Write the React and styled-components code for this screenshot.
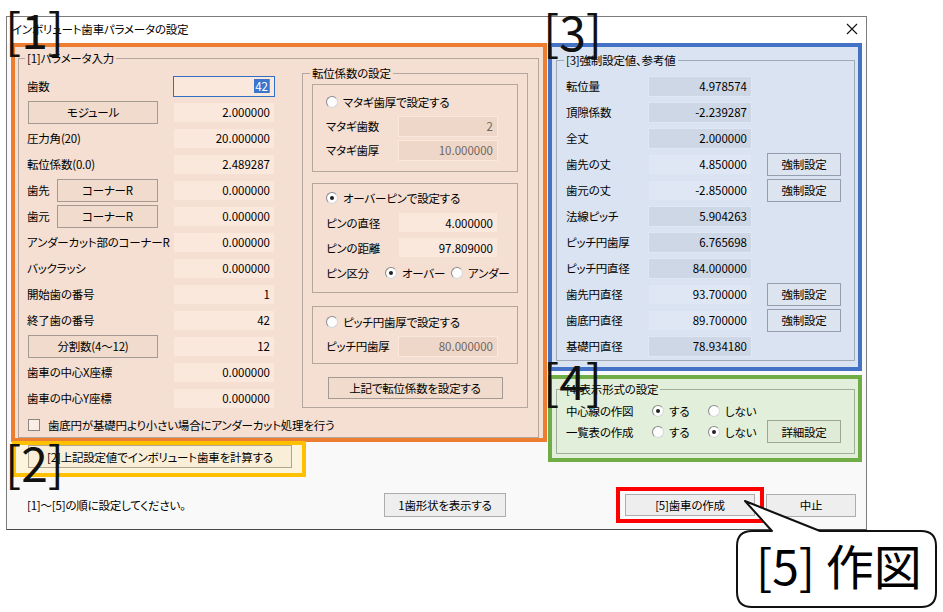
import React from 'react'
import styled, { createGlobalStyle } from 'styled-components'

const tones = {
  plain: { bg: '#f9f9f9', field: '#ffffff', off: '#f0f0f0', line: '#c8c8c8', btn: '#eeeeee', btnLine: '#adadad' },
  orange: { bg: '#f4dfd2', field: '#fbe8dc', off: '#eed7c9', line: '#b4a69c', btn: '#f1dbcd', btnLine: '#a39a94' },
  blue: { bg: '#dae3f1', field: '#e0e7f4', off: '#ced7e6', line: '#a0a9b6', btn: '#dce4f0', btnLine: '#959eae' },
  green: { bg: '#e2efda', field: '#e9f3e3', off: '#d8e5d0', line: '#a3ad9c', btn: '#dfebd7', btnLine: '#9ca697' },
  yellow: { bg: '#fdf4de', field: '#fff8e8', off: '#f3e9d2', line: '#c8bda6', btn: '#f9eed8', btnLine: '#b0a690' },
}

const GlobalStyle = createGlobalStyle`
  body {
    margin: 0;
    background: #ffffff;
    font-family: "Noto Sans CJK JP", "Noto Sans", sans-serif;
    font-size: 11.5px;
    letter-spacing: -0.2px;
    font-feature-settings: "palt";
    color: #000;
  }
`

const Page = styled.div`
  position: relative;
  width: 943px;
  height: 612px;
  overflow: hidden;
`

const Window = styled.div`
  margin: 16px 0 0 6px;
  width: 861px;
  height: 514px;
  box-sizing: border-box;
  border: 1px solid #7c7c7c;
  border-bottom-color: #4a4a4a;
  background: #f9f9f9;
  display: flex;
  flex-direction: column;
`

const TitleBar = styled.div`
  height: 26px;
  background: #ffffff;
  display: flex;
  align-items: center;
  justify-content: space-between;
  padding: 0 8px 2px 5px;
  box-sizing: border-box;
`

const TitleText = styled.span`
  line-height: 14px;
`

const Body = styled.div`
  display: flex;
  gap: 1px;
  padding-left: 4px;
`

const Column = styled.div`
  display: flex;
  flex-direction: column;
`

const Frame = styled.div`
  box-sizing: border-box;
  width: ${p => p.$w}px;
  height: ${p => p.$h}px;
  border: 4px solid ${p => p.$color};
  background: ${p => tones[p.$tone].bg};
  margin: ${p => p.$m || '0'};
  padding: ${p => p.$pad || '0'};
  display: flex;
  flex-direction: column;
`

const Group = styled.fieldset`
  margin: ${p => p.$m || '0'};
  padding: ${p => p.$pad || '0'};
  border: 1px solid ${p => tones[p.$tone].line};
  min-width: 0;
  box-sizing: border-box;
  width: ${p => (p.$w ? `${p.$w}px` : 'auto')};
  flex: ${p => (p.$grow ? 1 : 'none')};
`

const Legend = styled.legend`
  padding: 0 2px;
  margin-left: -2px;
  line-height: 14px;
`

const Box = styled.div`
  border: 1px solid ${p => tones[p.$tone].line};
  padding: ${p => p.$pad};
  margin-top: ${p => p.$mt || 0}px;
`

const Split = styled.div`
  display: flex;
  align-items: flex-start;
`

const Stack = styled.div`
  display: flex;
  flex-direction: column;
  width: ${p => (p.$w ? `${p.$w}px` : 'auto')};
  padding-top: ${p => p.$pt || 0}px;
`

const Row = styled.div`
  display: flex;
  align-items: center;
  height: ${p => p.$h || 26}px;
  justify-content: ${p => (p.$center ? 'center' : 'flex-start')};
  margin-top: ${p => p.$mt || 0}px;
`

const Label = styled.span`
  width: ${p => (p.$w ? `${p.$w}px` : 'auto')};
  flex: none;
  white-space: nowrap;
  line-height: 14px;
`

const Field = styled.div`
  box-sizing: border-box;
  width: ${p => p.$w}px;
  height: ${p => p.$h || 21}px;
  margin-left: ${p => (p.$auto ? 'auto' : '0')};
  border: 1px solid ${p => (p.$focus ? '#2f6fc6' : p.$off ? tones[p.$tone].field : tones[p.$tone].bg)};
  background: ${p => (p.$off ? tones[p.$tone].off : tones[p.$tone].field)};
  color: ${p => (p.$gray ? '#6e6660' : '#000')};
  display: flex;
  align-items: center;
  justify-content: flex-end;
  padding-right: 4px;
  white-space: nowrap;
  flex: none;
  letter-spacing: 0;
`

const Selected = styled.span`
  background: #3a76cc;
  color: #fff;
  line-height: 14px;
  padding: 0 1px;
  border-right: 1px solid #e07a2f;
`

const Btn = styled.div`
  box-sizing: border-box;
  width: ${p => p.$w}px;
  height: ${p => p.$h || 22}px;
  margin-left: ${p => p.$ml || 0}px;
  border: 1px solid ${p => tones[p.$tone].btnLine};
  background: ${p => tones[p.$tone].btn};
  display: flex;
  align-items: center;
  justify-content: center;
  flex: none;
  white-space: nowrap;
`

const Option = styled.span`
  display: inline-flex;
  align-items: center;
  width: ${p => (p.$w ? `${p.$w}px` : 'auto')};
  flex: none;
  white-space: nowrap;
`

const Radio = styled.span`
  box-sizing: border-box;
  width: 12px;
  height: 12px;
  border-radius: 50%;
  border: 1px solid;
  border-color: #8a8a8a #d6d6d6 #d6d6d6 #8a8a8a;
  background: #fdfdfd;
  margin-right: 5px;
  display: inline-flex;
  align-items: center;
  justify-content: center;
  flex: none;

  &::after {
    content: '';
    width: 4px;
    height: 4px;
    border-radius: 50%;
    background: ${p => (p.$on ? '#222' : 'transparent')};
  }
`

const CheckRow = styled.div`
  display: flex;
  align-items: center;
  height: 14px;
  margin: 7px 0 0 1px;
`

const Check = styled.span`
  box-sizing: border-box;
  width: 12px;
  height: 12px;
  border: 1px solid #8a8580;
  background: #fbeee6;
  margin-right: 8px;
`

const Footer = styled.div`
  display: flex;
  align-items: center;
  height: 36px;
  margin-top: 10px;
  padding-left: 20px;
`

const Note = styled.span`
  width: 357px;
  flex: none;
`

const Annot = styled.span`
  position: absolute;
  left: ${p => p.$x}px;
  top: ${p => p.$y}px;
  font-family: "Noto Sans CJK JP", sans-serif;
  font-feature-settings: normal;
  letter-spacing: 0;
  font-size: 48px;
  line-height: 48px;
  color: #111;
`

const Callout = styled.div`
  position: absolute;
  left: 736px;
  top: 498px;
  width: 203px;
  height: 112px;
`

const CalloutText = styled.div`
  position: absolute;
  left: 20px;
  top: 38px;
  font-family: "Noto Sans CJK JP", sans-serif;
  font-feature-settings: normal;
  letter-spacing: 0;
  font-size: 48px;
  line-height: 56px;
  white-space: nowrap;
`

function CloseIcon() {
  return (
    <svg width="12" height="12" viewBox="0 0 12 12">
      <path d="M1 1L11 11M11 1L1 11" stroke="#111" strokeWidth="1.1" />
    </svg>
  )
}

function ValueRow({ tone, label, value, lw, fw, off, gray, h }) {
  return (
    <Row $h={h}>
      <Label $w={lw}>{label}</Label>
      <Field $tone={tone} $w={fw} $off={off} $gray={gray}>{value}</Field>
    </Row>
  )
}

const leftRows = [
  { kind: 'focus', label: '歯数', value: '42' },
  { kind: 'btn', label: 'モジュール', value: '2.000000' },
  { label: '圧力角(20)', value: '20.000000' },
  { label: '転位係数(0.0)', value: '2.489287' },
  { kind: 'corner', label: '歯先', value: '0.000000' },
  { kind: 'corner', label: '歯元', value: '0.000000' },
  { label: 'アンダーカット部のコーナーR', value: '0.000000' },
  { label: 'バックラッシ', value: '0.000000' },
  { label: '開始歯の番号', value: '1' },
  { label: '終了歯の番号', value: '42' },
  { kind: 'btn', label: '分割数(4～12)', value: '12' },
  { label: '歯車の中心X座標', value: '0.000000' },
  { label: '歯車の中心Y座標', value: '0.000000' },
]

const refRows = [
  { label: '転位量', value: '4.978574', off: true },
  { label: '頂隙係数', value: '-2.239287', off: true },
  { label: '全丈', value: '2.000000', off: true },
  { label: '歯先の丈', value: '4.850000', force: true },
  { label: '歯元の丈', value: '-2.850000', force: true },
  { label: '法線ピッチ', value: '5.904263', off: true },
  { label: 'ピッチ円歯厚', value: '6.765698', off: true },
  { label: 'ピッチ円直径', value: '84.000000', off: true },
  { label: '歯先円直径', value: '93.700000', force: true },
  { label: '歯底円直径', value: '89.700000', force: true },
  { label: '基礎円直径', value: '78.934180', off: true },
]

function ParamRow({ row }) {
  const t = 'orange'
  let head
  if (row.kind === 'btn') head = <Btn $tone={t} $w={130} $h={23} $ml={1}>{row.label}</Btn>
  else if (row.kind === 'corner')
    head = (
      <>
        <Label $w={30}>{row.label}</Label>
        <Btn $tone={t} $w={101} $h={23}>コーナーR</Btn>
      </>
    )
  else head = <Label>{row.label}</Label>
  return (
    <Row>
      {head}
      {row.kind === 'focus' ? (
        <Field $tone={t} $w={102} $auto $focus>
          <Selected>{row.value}</Selected>
        </Field>
      ) : (
        <Field $tone={t} $w={102} $auto>{row.value}</Field>
      )}
    </Row>
  )
}

function ShiftGroup() {
  const t = 'orange'
  return (
    <Group $tone={t} $w={226} $m="0 0 0 27px" $pad="4px 9px 8px 9px">
      <Legend>転位係数の設定</Legend>
      <Box $tone={t} $pad="5px 0 9px 13px">
        <Row $h={24}>
          <Radio />
          <span>マタギ歯厚で設定する</span>
        </Row>
        <ValueRow tone={t} label="マタギ歯数" value="2" lw={72} fw={100} off gray h={24} />
        <ValueRow tone={t} label="マタギ歯厚" value="10.000000" lw={72} fw={100} off gray h={24} />
      </Box>
      <Box $tone={t} $pad="1px 0 7px 13px" $mt={11}>
        <Row $h={25}>
          <Radio $on />
          <span>オーバーピンで設定する</span>
        </Row>
        <ValueRow tone={t} label="ピンの直径" value="4.000000" lw={72} fw={100} h={25} />
        <ValueRow tone={t} label="ピンの距離" value="97.809000" lw={72} fw={100} h={25} />
        <Row $h={25}>
          <Label $w={59}>ピン区分</Label>
          <Option $w={66}>
            <Radio $on />
            オーバー
          </Option>
          <Option>
            <Radio />
            アンダー
          </Option>
        </Row>
      </Box>
      <Box $tone={t} $pad="3px 0 5px 13px" $mt={13}>
        <Row $h={24}>
          <Radio />
          <span>ピッチ円歯厚で設定する</span>
        </Row>
        <ValueRow tone={t} label="ピッチ円歯厚" value="80.000000" lw={72} fw={100} off gray h={24} />
      </Box>
      <Row $h={22} $mt={13} $center>
        <Btn $tone={t} $w={175}>上記で転位係数を設定する</Btn>
      </Row>
    </Group>
  )
}

export default function App() {
  return (
    <Page>
      <GlobalStyle />
      <Window>
        <TitleBar>
          <TitleText>インボリュート歯車パラメータの設定</TitleText>
          <CloseIcon />
        </TitleBar>
        <Body>
          <Column>
            <Frame $color="#ed7d31" $tone="orange" $w={536} $h={399}>
              <Group $tone="orange" $grow $m="4px 4px 0 3px" $pad="1px 8px 3px 8px">
                <Legend>[1]パラメータ入力</Legend>
                <Split>
                  <Stack $w={248} $pt={7}>
                    {leftRows.map(r => (
                      <ParamRow key={r.label} row={r} />
                    ))}
                  </Stack>
                  <ShiftGroup />
                </Split>
                <CheckRow>
                  <Check />
                  <span>歯底円が基礎円より小さい場合にアンダーカット処理を行う</span>
                </CheckRow>
              </Group>
            </Frame>
            <Frame $color="#ffc000" $tone="yellow" $w={294} $h={36} $m="-1px 0 0 1px" $pad="0 0 0 12px">
              <Btn $tone="yellow" $w={264} $h={23}>[2]上記設定値でインボリュート歯車を計算する</Btn>
            </Frame>
          </Column>
          <Column>
            <Frame $color="#4472c4" $tone="blue" $w={314} $h={328}>
              <Group $tone="blue" $m="6px 3px 0 4px" $pad="6px 8px 1px 9px">
                <Legend>[3]強制設定値、参考値</Legend>
                {refRows.map(r => (
                  <Row key={r.label}>
                    <Label $w={82}>{r.label}</Label>
                    <Field $tone="blue" $w={104} $off={r.off}>{r.value}</Field>
                    {r.force && <Btn $tone="blue" $w={74} $h={23} $ml={15}>強制設定</Btn>}
                  </Row>
                ))}
              </Group>
            </Frame>
            <Frame $color="#70ad47" $tone="green" $w={314} $h={87} $m="4px 0 0 0">
              <Group $tone="green" $m="3px 3px 0 4px" $pad="4px 8px 11px 9px">
                <Legend>[4]表示形式の設定</Legend>
                <Row $h={21}>
                  <Label $w={86}>中心線の作図</Label>
                  <Option $w={56}>
                    <Radio $on />
                    する
                  </Option>
                  <Option>
                    <Radio />
                    しない
                  </Option>
                </Row>
                <Row $h={21}>
                  <Label $w={86}>一覧表の作成</Label>
                  <Option $w={56}>
                    <Radio />
                    する
                  </Option>
                  <Option $w={59}>
                    <Radio $on />
                    しない
                  </Option>
                  <Btn $tone="green" $w={74} $h={23}>詳細設定</Btn>
                </Row>
              </Group>
            </Frame>
          </Column>
        </Body>
        <Footer>
          <Note>[1]～[5]の順に設定してください。</Note>
          <Btn $tone="plain" $w={122} $h={24}>1歯形状を表示する</Btn>
          <Frame $color="#ff0000" $tone="plain" $w={148} $h={36} $m="0 0 0 110px" $pad="3px 5px">
            <Btn $tone="plain" $w={130} $h={22}>[5]歯車の作成</Btn>
          </Frame>
          <Btn $tone="plain" $w={90} $h={23} $ml={2}>中止</Btn>
        </Footer>
      </Window>

      <Annot $x={5} $y={4}>[1]</Annot>
      <Annot $x={5} $y={437}>[2]</Annot>
      <Annot $x={543} $y={6}>[3]</Annot>
      <Annot $x={543} $y={355}>[4]</Annot>

      <Callout>
        <svg width="203" height="112" viewBox="0 0 203 112" style={{ position: 'absolute', inset: 0 }}>
          <path
            d="M16 33 L36 33 L9 3 L84 33 L185 33 Q200 33 200 48 L200 94 Q200 109 185 109 L16 109 Q1 109 1 94 L1 48 Q1 33 16 33 Z"
            fill="#ffffff"
            stroke="#111"
            strokeWidth="2"
            strokeLinejoin="round"
          />
        </svg>
        <CalloutText>[5] 作図</CalloutText>
      </Callout>
    </Page>
  )
}
